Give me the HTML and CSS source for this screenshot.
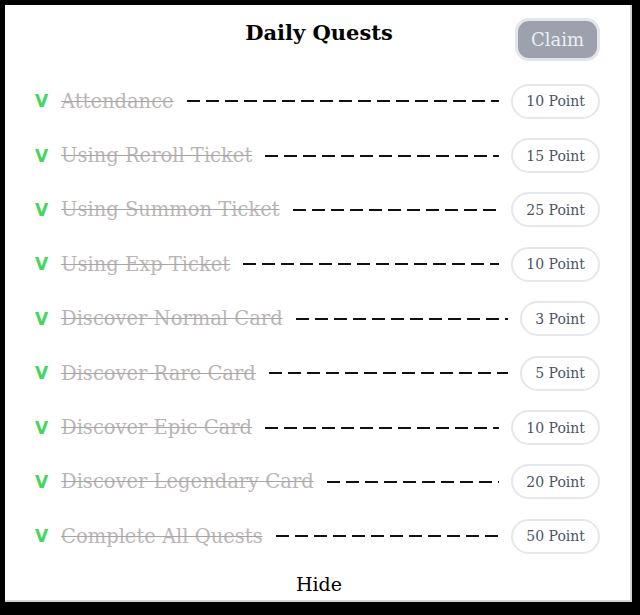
FILE: index.html
```html
<!DOCTYPE html>
<html lang="en">

<head>
    <meta charset="UTF-8">
    <meta name="viewport" content="width=device-width, initial-scale=1.0">
    <title>Daily Quests</title>
    <link rel="stylesheet" href="styles.css">
</head>

<body>
    <div class="panel">
        <header>
            <h1>Daily Quests</h1>
            <button class="claim">Claim</button>
        </header>

        <ul class="quests">
            <li><span class="check">V</span><span class="name">Attendance</span><span class="dash"></span><span class="point">10 Point</span></li>
            <li><span class="check">V</span><span class="name">Using Reroll Ticket</span><span class="dash"></span><span class="point">15 Point</span></li>
            <li><span class="check">V</span><span class="name">Using Summon Ticket</span><span class="dash"></span><span class="point">25 Point</span></li>
            <li><span class="check">V</span><span class="name">Using Exp Ticket</span><span class="dash"></span><span class="point">10 Point</span></li>
            <li><span class="check">V</span><span class="name">Discover Normal Card</span><span class="dash"></span><span class="point">3 Point</span></li>
            <li><span class="check">V</span><span class="name">Discover Rare Card</span><span class="dash"></span><span class="point">5 Point</span></li>
            <li><span class="check">V</span><span class="name">Discover Epic Card</span><span class="dash"></span><span class="point">10 Point</span></li>
            <li><span class="check">V</span><span class="name">Discover Legendary Card</span><span class="dash"></span><span class="point">20 Point</span></li>
            <li><span class="check">V</span><span class="name">Complete All Quests</span><span class="dash"></span><span class="point">50 Point</span></li>
        </ul>

        <div class="hide">Hide</div>
    </div>
</body>

</html>
```

FILE: styles.css
```css
* {
    box-sizing: border-box;
    margin: 0;
    padding: 0;
}

body {
    font-family: 'DejaVu Serif', serif;
    background-color: #000;
    padding: 5px 8px 13px 5px;
    height: 615px;
    overflow: hidden;
}

.panel {
    background: #fff;
    height: 597px;
    padding: 13px 30px 0 30px;
    border-right: 2px solid #d4d4d4;
    border-bottom: 2px solid #d4d4d4;
}

header {
    display: flex;
    justify-content: center;
    align-items: center;
    position: relative;
    height: 43px;
}

header h1 {
    font-size: 21px;
    font-weight: bold;
    color: #000;
    margin-top: -15px;
    margin-left: 3px;
}

.claim {
    position: absolute;
    right: 0;
    top: 0;
    width: 85px;
    height: 43px;
    background-color: #9ca1ad;
    color: #eceef2;
    border: 3px solid #e3e5ea;
    border-radius: 14px;
    font-family: 'DejaVu Serif', serif;
    font-size: 18px;
}

.quests {
    list-style: none;
    margin-top: 13px;
}

.quests li {
    display: flex;
    align-items: center;
    height: 54.4px;
}

.check {
    font-family: 'DejaVu Sans', sans-serif;
    font-size: 17px;
    font-weight: bold;
    color: #45d65d;
    width: 26px;
}

.name {
    font-size: 19.5px;
    color: #bab5b5;
    text-decoration: line-through;
    text-decoration-color: #a9a5a5;
    white-space: nowrap;
}

.dash {
    flex: 1;
    height: 2px;
    margin: 0 12px 0 13px;
    background: repeating-linear-gradient(to right, #111 0 13px, transparent 13px 19px);
}

.point {
    border: 2px solid #e5e7eb;
    border-radius: 18px;
    height: 35px;
    padding: 0 13px;
    display: flex;
    align-items: center;
    font-size: 14px;
    color: #4b5563;
    white-space: nowrap;
}

.hide {
    text-align: center;
    font-size: 19px;
    color: #000;
    margin-top: 9px;
    margin-left: 3px;
}
```
